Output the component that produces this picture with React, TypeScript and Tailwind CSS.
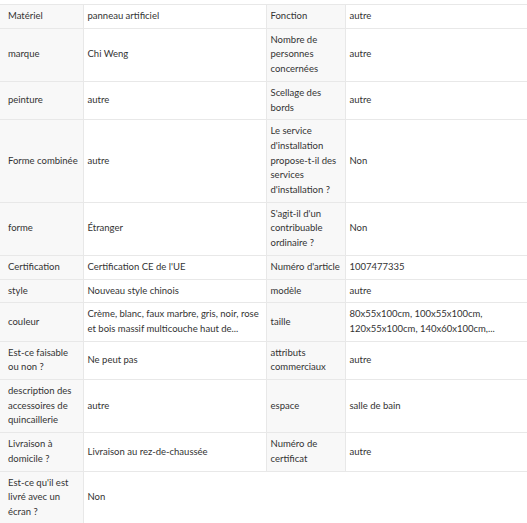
import React from "react";

type Row = {
  label: string[];
  value: string[];
  label2?: string[];
  value2?: string[];
};

// each string in an array is one line of the cell
const rows: Row[] = [
  { label: ["Matériel"], value: ["panneau artificiel"], label2: ["Fonction"], value2: ["autre"] },
  { label: ["marque"], value: ["Chi Weng"], label2: ["Nombre de", "personnes", "concernées"], value2: ["autre"] },
  { label: ["peinture"], value: ["autre"], label2: ["Scellage des", "bords"], value2: ["autre"] },
  {
    label: ["Forme combinée"],
    value: ["autre"],
    label2: ["Le service", "d'installation", "propose-t-il des", "services", "d'installation ?"],
    value2: ["Non"],
  },
  { label: ["forme"], value: ["Étranger"], label2: ["S'agit-il d'un", "contribuable", "ordinaire ?"], value2: ["Non"] },
  { label: ["Certification"], value: ["Certification CE de l'UE"], label2: ["Numéro d'article"], value2: ["1007477335"] },
  { label: ["style"], value: ["Nouveau style chinois"], label2: ["modèle"], value2: ["autre"] },
  {
    label: ["couleur"],
    value: ["Crème, blanc, faux marbre, gris, noir, rose", "et bois massif multicouche haut de..."],
    label2: ["taille"],
    value2: ["80x55x100cm, 100x55x100cm,", "120x55x100cm, 140x60x100cm,..."],
  },
  { label: ["Est-ce faisable", "ou non ?"], value: ["Ne peut pas"], label2: ["attributs", "commerciaux"], value2: ["autre"] },
  {
    label: ["description des", "accessoires de", "quincaillerie"],
    value: ["autre"],
    label2: ["espace"],
    value2: ["salle de bain"],
  },
  {
    label: ["Livraison à", "domicile ?"],
    value: ["Livraison au rez-de-chaussée"],
    label2: ["Numéro de", "certificat"],
    value2: ["autre"],
  },
  { label: ["Est-ce qu'il est", "livré avec un", "écran ?"], value: ["Non"] },
];

function Lines({ lines }: { lines: string[] }) {
  return (
    <>
      {lines.map((line, i) => (
        <span key={i} className="block whitespace-nowrap">
          {line}
        </span>
      ))}
    </>
  );
}

export default function App() {
  return (
    <div className="bg-white w-[527px] h-[523px] overflow-hidden pt-1 font-['Lato','Liberation_Sans',sans-serif] text-[9.5px] leading-[14.7px] text-[#333]">
      <table className="table-fixed border-collapse w-[540px]">
        <colgroup>
          <col className="w-[83px]" />
          <col className="w-[183px]" />
          <col className="w-[79px]" />
          <col />
        </colgroup>
        <tbody>
          {rows.map((row, i) => (
            <tr key={i} className="border-t border-b border-[#e8e8e8]">
              <td className="bg-[#f8f8f8] pl-2 pr-1 py-1 align-middle">
                <Lines lines={row.label} />
              </td>
              {row.label2 ? (
                <>
                  <td className="border-l border-[#e8e8e8] px-1 py-1 align-middle">
                    <Lines lines={row.value} />
                  </td>
                  <td className="border-l border-[#e8e8e8] bg-[#f8f8f8] px-1 py-1 align-middle">
                    <Lines lines={row.label2} />
                  </td>
                  <td className="border-l border-[#e8e8e8] px-1 py-1 align-middle">
                    <Lines lines={row.value2 ?? []} />
                  </td>
                </>
              ) : (
                <td colSpan={3} className="border-l border-[#e8e8e8] px-1 py-1 align-middle">
                  <Lines lines={row.value} />
                </td>
              )}
            </tr>
          ))}
        </tbody>
      </table>
    </div>
  );
}
